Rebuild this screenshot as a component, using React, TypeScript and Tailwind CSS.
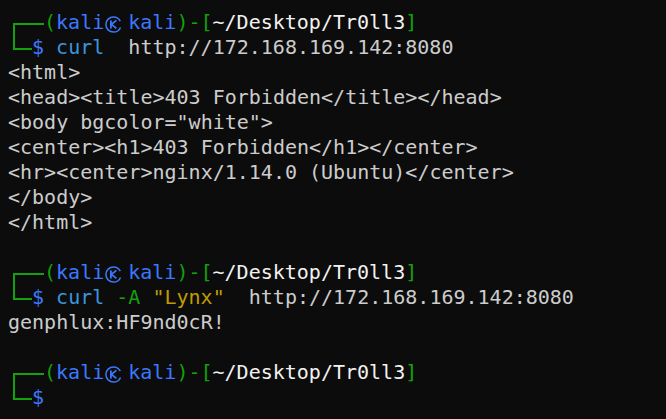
import React from 'react';

const G = 'text-[#13a10e]';
const B = 'text-[#3b78ff]';

// ㉿ mark, drawn as a small icon
function KMark() {
  return (
    <span className="inline-block h-[25px] w-[24px] align-top" aria-label="㉿">
      <svg width="24" height="25" viewBox="0 0 24 25" fill="none" stroke="#3b78ff">
        <circle cx="9.5" cy="14.5" r="7.6" strokeWidth="1.5" strokeDasharray="41 7" strokeDashoffset="-3" />
        <path d="M6.9 10.6 V18.4" strokeWidth="1.8" />
        <path d="M12.4 10.4 L7.4 14.4 L12.4 18.4" strokeWidth="1.8" strokeLinejoin="round" />
      </svg>
    </span>
  );
}

function Prompt() {
  return (
    <div className="h-[25px]">
      {/* ┌── drawn as a corner */}
      <span className="relative inline-block h-[25px] w-[36px] align-top">
        <span className="absolute left-[5px] right-0 top-[13px] bottom-0 border-l-2 border-t-2 border-[#13a10e]" />
      </span>
      <span className={G}>(</span>
      <span className={B}>kali</span>
      <KMark />
      <span className={B}>kali</span>
      <span className={G}>)-[</span>
      <span className="text-[#f2f2f2]">~/Desktop/Tr0ll3</span>
      <span className={G}>]</span>
    </div>
  );
}

function Cmd({ children }: { children?: React.ReactNode }) {
  return (
    <div className="h-[25px]">
      {/* └─ drawn as a corner */}
      <span className="relative inline-block h-[25px] w-[24px] align-top">
        <span className="absolute left-[5px] right-0 top-0 h-[15px] border-l-2 border-b-2 border-[#13a10e]" />
      </span>
      <span className={B}>$</span>
      {children}
    </div>
  );
}

export default function App() {
  const out1 = [
    '<html>',
    '<head><title>403 Forbidden</title></head>',
    '<body bgcolor="white">',
    '<center><h1>403 Forbidden</h1></center>',
    '<hr><center>nginx/1.14.0 (Ubuntu)</center>',
    '</body>',
    '</html>',
  ];

  return (
    <div
      className="h-[419px] w-[666px] overflow-hidden bg-[#0c0c0c] pl-[8px] pt-[10px] text-[20px] leading-[25px] whitespace-pre text-[#cccccc]"
      style={{ fontFamily: '"DejaVu Sans Mono", "Liberation Mono", monospace' }}
    >
      <Prompt />
      <Cmd>
        {' '}
        <span className="text-[#3a96dd]">curl</span>
        {'  http://172.168.169.142:8080'}
      </Cmd>
      {out1.map((l, i) => (
        <div key={i} className="h-[25px]">{l}</div>
      ))}
      <div className="h-[25px]" />

      <Prompt />
      <Cmd>
        {' '}
        <span className="text-[#3a96dd]">curl</span>{' '}
        <span className={G}>-A</span>{' '}
        <span className="text-[#c19c00]">"Lynx"</span>
        {'  http://172.168.169.142:8080'}
      </Cmd>
      <div className="h-[25px]">genphlux:HF9nd0cR!</div>
      <div className="h-[25px]" />

      <Prompt />
      <Cmd />
    </div>
  );
}
